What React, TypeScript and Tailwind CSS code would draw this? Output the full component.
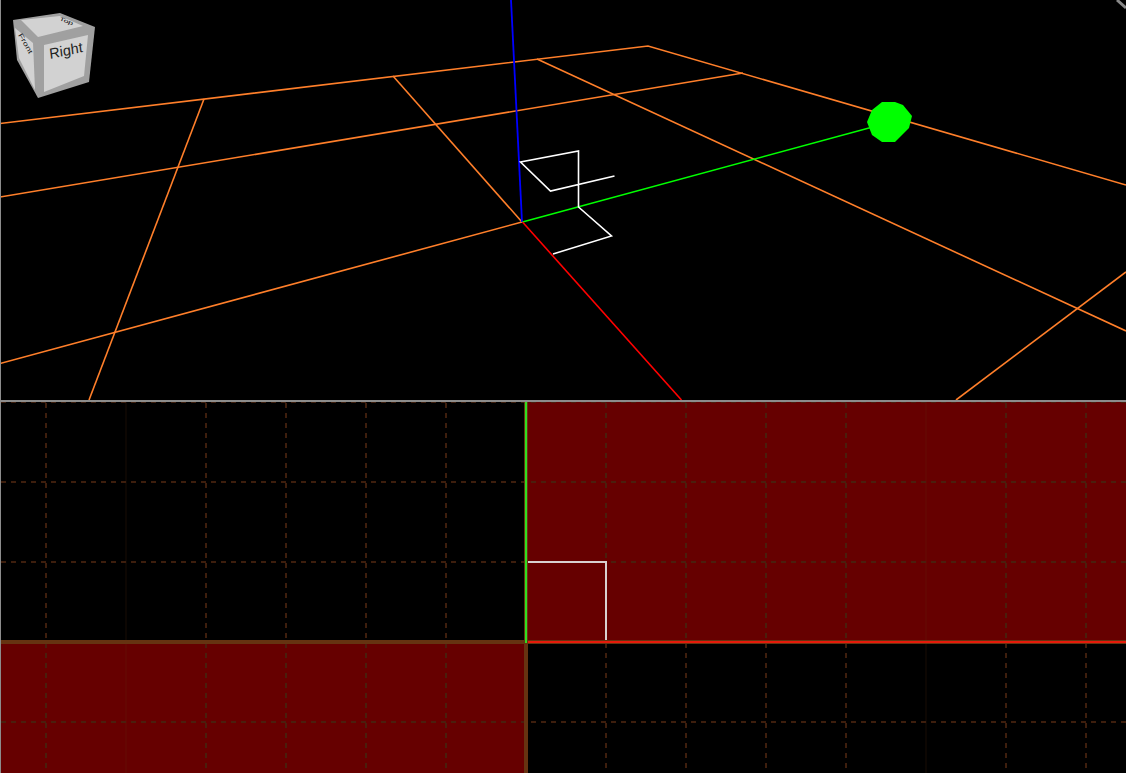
const ORANGE = [
  "0,123.5 648,46 1126,185",
  "0,197 743,73",
  "0,363.5 522,222",
  "204,99 89,400",
  "393,76 522,222",
  "537,59 1126,331",
  "1126,272 956,400",
];

const DASHED_V = [46, 206, 286, 366, 446, 606, 686, 766, 846, 1006, 1086];
const FAINT_V = [126, 926];
const DASHED_H = [482, 562, 722];
const DASH = "rgb(72,35,15)";

function Cube() {
  return (
    <svg className="absolute left-0 top-0" width="110" height="110" viewBox="0 0 110 110">
      <polygon points="13,20 60,13 95,27 89,82 38,98 17,60" fill="#a0a0a0" />
      <polygon points="21,20 60,16 83,26 38,37" fill="#d2d2d2" />
      <polygon points="44,45 88,35 84,76 44,92" fill="#d2d2d2" />
      <polygon points="15,28 33,43 35,90 19,58" fill="#d2d2d2" />
      <text
        transform="translate(50,59) rotate(-12) skewX(-5)"
        fontSize="14.5"
        fill="#222"
        fontFamily="'Liberation Sans', sans-serif"
      >
        Right
      </text>
      <text
        transform="translate(18,35) rotate(60) scale(1.2,0.85)"
        fontSize="8"
        fill="#111"
        fontFamily="'Liberation Sans', sans-serif"
      >
        Front
      </text>
      <text
        transform="translate(59,20) rotate(22) scale(1,0.6)"
        fontSize="9"
        fill="#111"
        fontFamily="'Liberation Sans', sans-serif"
      >
        Top
      </text>
    </svg>
  );
}

function Viewport() {
  return (
    <div className="relative h-[400px] overflow-hidden bg-black">
      <svg className="block" width="1126" height="400" viewBox="0 0 1126 400" fill="none">
        {ORANGE.map((p) => (
          <polyline key={p} points={p} stroke="#ff7f2a" strokeWidth="1.6" />
        ))}
        <polyline points="511,0 522,222" stroke="#0000ff" strokeWidth="1.8" />
        <polyline points="522.5,222 880,125" stroke="#00ff00" strokeWidth="1.6" />
        <polyline points="522.5,222 681.5,400" stroke="#ff0000" strokeWidth="1.6" />
        <polyline points="553,254 611.5,236 578.5,207 578.5,151 520.5,162 550.5,191 614.5,176" stroke="#ffffff" strokeWidth="1.6" />
        <polygon
          points="882,102 895,102 903,105 912,116 909,128 895,142 882,142 872,135 867,122 872,110"
          fill="#00ff00"
        />
        <polyline points="1117,0 1126,8" stroke="#888888" strokeWidth="3" />
      </svg>
      <Cube />
    </div>
  );
}

function Plan() {
  return (
    <div className="relative flex-1 border-t-2 border-[#8c8c8c]">
      <div className="grid h-full grid-cols-[526px_1fr] grid-rows-[240px_1fr]">
        <div className="bg-black" />
        <div className="bg-[#660000]" />
        <div className="bg-[#660000]" />
        <div className="bg-black" />
      </div>
      <svg className="absolute left-0 top-[-402px]" width="1126" height="773" viewBox="0 0 1126 773" fill="none">
        {DASHED_V.map((x) => (
          <line key={x} x1={x} y1="403" x2={x} y2="773" stroke={DASH} strokeWidth="2" strokeOpacity="0.85" strokeDasharray="5 5" />
        ))}
        {FAINT_V.map((x) => (
          <line key={x} x1={x} y1="402" x2={x} y2="773" stroke="#663311" strokeWidth="2" strokeOpacity="0.12" />
        ))}
        <line x1="1" y1="402.5" x2="1126" y2="402.5" stroke={DASH} strokeOpacity="0.85" strokeDasharray="5 5" />
        {DASHED_H.map((y) => (
          <line key={y} x1="1" y1={y} x2="1126" y2={y} stroke={DASH} strokeWidth="2" strokeOpacity="0.85" strokeDasharray="5 5" />
        ))}
        <polyline points="527,562 606,562 606,641" stroke="#d8d0d0" strokeWidth="2" />
        <line x1="0" y1="642" x2="1126" y2="642" stroke="#663311" strokeWidth="4" />
        <line x1="526" y1="642" x2="1126" y2="642" stroke="#e61a0a" strokeWidth="2" />
        <line x1="526" y1="640" x2="526" y2="773" stroke="#663311" strokeWidth="4" />
        <line x1="526" y1="402" x2="526" y2="640" stroke="#663311" strokeWidth="4" />
        <line x1="526" y1="402" x2="526" y2="643" stroke="#33dd22" strokeWidth="2" />
      </svg>
    </div>
  );
}

export default function App() {
  return (
    <div className="relative flex h-[773px] w-[1126px] flex-col overflow-hidden bg-black">
      <Viewport />
      <Plan />
      <div className="absolute bottom-0 left-0 top-0 w-px bg-[#8c8c8c]" />
    </div>
  );
}
